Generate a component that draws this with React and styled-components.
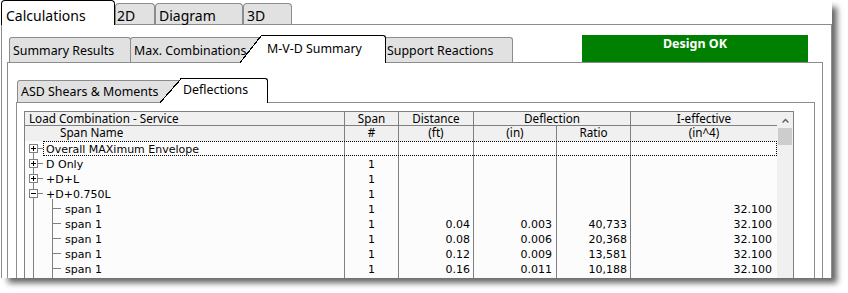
import styled, { createGlobalStyle, css } from 'styled-components'

const GlobalStyle = createGlobalStyle`
  html, body {
    margin: 0;
    background: #fff;
  }
  body {
    width: 848px;
    height: 293px;
    overflow: hidden;
  }
`

const UI_FONT = `'Noto Sans', 'Open Sans', sans-serif`
const GRID_FONT = `'DejaVu Sans', Verdana, sans-serif`
const PANEL_LINE = '#8c8c8c'
const GRID_LINE = '#808080'

const Window = styled.div`
  width: 831px;
  height: 278px;
  margin-left: 1px;
  display: flex;
  flex-direction: column;
  overflow: hidden;
  background: #fff;
  box-shadow: 6px 6px 6px -1px rgba(0, 0, 0, 0.6);
  font-family: ${UI_FONT};
  color: #000;
`

const TopStrip = styled.div`
  flex: none;
  display: flex;
  align-items: flex-end;
  height: 24px;
  position: relative;
  z-index: 1;
`

const TopTab = styled.div`
  box-sizing: border-box;
  flex: none;
  display: flex;
  align-items: flex-end;
  width: ${p => p.$w}px;
  height: ${p => (p.$active ? 25 : 21)}px;
  margin-bottom: ${p => (p.$active ? -1 : 0)}px;
  padding: 0 0 ${p => (p.$active ? 1 : 0)}px ${p => p.$pl}px;
  border: 1px solid ${p => (p.$active ? '#000' : PANEL_LINE)};
  border-bottom: none;
  border-radius: 4px 4px 0 0;
  background: ${p => (p.$active ? '#fff' : '#e1e1e1')};
  font-size: 14px;
  line-height: 17px;
  white-space: nowrap;
`

const Panel = styled.div`
  flex: 1;
  min-height: 0;
  display: flex;
  flex-direction: column;
  border: 1px solid ${PANEL_LINE};
  border-bottom: none;
  margin: ${p => p.$margin || 0};
  padding: ${p => p.$padding || 0};
`

const TabStrip = styled.div`
  box-sizing: border-box;
  flex: none;
  display: flex;
  align-items: flex-end;
  height: ${p => p.$h}px;
  padding: ${p => p.$pt}px 0 0 ${p => p.$pl}px;
  margin: ${p => p.$margin};
  position: relative;
  z-index: 1;
`

const Tab = styled.div`
  box-sizing: border-box;
  flex: none;
  position: relative;
  display: flex;
  align-items: flex-end;
  width: ${p => p.$w}px;
  height: ${p => p.$h}px;
  margin-left: ${p => p.$ml || 0}px;
  padding: 0 0 ${p => p.$pb}px ${p => p.$pl}px;
  border: 1px solid ${PANEL_LINE};
  border-bottom: none;
  border-radius: 3px 3px 0 0;
  background: #e1e1e1;
  font-size: 12.4px;
  line-height: 15px;
  white-space: nowrap;
  overflow: hidden;
`

// selected tab: white body with a slanted left edge that runs over the previous tab
const ActiveTab = styled(Tab)`
  z-index: 2;
  overflow: visible;
  margin-bottom: -1px;
  border-color: #000;
  border-left: none;
  border-top-left-radius: 0;
  background: #fff;

  &::before {
    content: '';
    position: absolute;
    top: -1px;
    bottom: 0;
    left: -22px;
    width: 22px;
    background: linear-gradient(
      to bottom right,
      transparent calc(50% - 0.8px),
      #000 calc(50% - 0.8px),
      #000 calc(50% + 0.4px),
      #fff calc(50% + 0.4px)
    );
  }
`

const StatusBadge = styled.div`
  flex: none;
  box-sizing: border-box;
  width: 226px;
  height: 27px;
  margin: 0 15px 0 auto;
  padding-top: 1px;
  background: #008000;
  color: #fff;
  font-size: 12.5px;
  font-weight: 700;
  line-height: 15px;
  text-align: center;
`

const columns = css`
  display: grid;
  grid-template-columns: 319px 54px 75px 83px 74px 147px;
`

const Grid = styled.div`
  box-sizing: border-box;
  width: 770px;
  flex: 1;
  min-height: 0;
  display: flex;
  border: 1px solid ${GRID_LINE};
  border-bottom: none;
  background: #fcfcfc;
`

const Sheet = styled.div`
  width: 752px;
  display: flex;
  flex-direction: column;
`

const HeadRow = styled.div`
  ${columns};
  flex: none;
  box-sizing: border-box;
  height: ${p => p.$h}px;
  background: #f0f0f0;
  border-bottom: ${p => (p.$rule ? `1px solid ${GRID_LINE}` : 'none')};
  font-size: 11.7px;
  line-height: ${p => p.$lh}px;
`

const HeadCell = styled.div`
  grid-column: span ${p => p.$span || 1};
  border-left: ${p => (p.$first ? 'none' : `1px solid ${GRID_LINE}`)};
  padding-left: ${p => p.$pl || 0}px;
  text-align: ${p => (p.$first ? 'left' : 'center')};
  white-space: nowrap;
`

const DataRow = styled.div`
  ${columns};
  grid-auto-rows: 15px;
  flex: none;
  height: 15px;
  position: relative;
  font-family: ${GRID_FONT};
  font-size: 11px;
  line-height: 15px;

  ${p =>
    p.$focused &&
    css`
      &::after {
        content: '';
        position: absolute;
        inset: 0 0 0 18px;
        border: 1px dotted #000;
        pointer-events: none;
      }
    `}
`

const NameCell = styled.div`
  display: flex;
  align-items: flex-start;
  white-space: nowrap;
`

const NameText = styled.span`
  padding-top: 1px;
`

const DataCell = styled.div`
  box-sizing: border-box;
  border-left: 1px solid ${GRID_LINE};
  padding: 1px ${p => p.$pr || 0}px 0 0;
  text-align: ${p => p.$align || 'right'};
  white-space: nowrap;
  overflow: hidden;
`

const ScrollBar = styled.div`
  width: 16px;
  flex: none;
  display: flex;
  flex-direction: column;
  align-items: center;
  background: #f0f0f0;
`

const ScrollButton = styled.div`
  width: 16px;
  height: 16px;
  display: flex;
  align-items: center;
  justify-content: center;
`

const ScrollThumb = styled.div`
  width: 14px;
  height: 17px;
  background: #cdcdcd;
`

function TreeGlyph({ kind, open }) {
  const w = kind === 'child' ? 40 : 21
  return (
    <svg width={w} height="15" viewBox={`0 0 ${w} 15`} overflow="visible" shapeRendering="crispEdges">
      <line x1="8.5" y1={kind === 'first' ? 7 : 0} x2="8.5" y2="15" stroke="#808080" />
      {kind === 'child' ? (
        <>
          <line x1="27.5" y1="0" x2="27.5" y2="15" stroke="#808080" />
          <line x1="28" y1="7.5" x2="36" y2="7.5" stroke="#808080" />
        </>
      ) : (
        <>
          <line x1="13" y1="7.5" x2="18" y2="7.5" stroke="#808080" />
          <rect x="4.5" y="3.5" width="8" height="8" fill="#fff" stroke="#808080" />
          <line x1="6" y1="7.5" x2="11" y2="7.5" stroke="#000" />
          {!open && <line x1="8.5" y1="5" x2="8.5" y2="10" stroke="#000" />}
          {open && <line x1="27.5" y1="13" x2="27.5" y2="15" stroke="#808080" />}
        </>
      )}
    </svg>
  )
}

const rows = [
  { kind: 'first', name: 'Overall MAXimum Envelope', focused: true },
  { kind: 'root', name: 'D Only', span: '1' },
  { kind: 'root', name: '+D+L', span: '1' },
  { kind: 'root', open: true, name: '+D+0.750L', span: '1' },
  { kind: 'child', name: 'span 1', span: '1', ieff: '32.100' },
  { kind: 'child', name: 'span 1', span: '1', dist: '0.04', defl: '0.003', ratio: '40,733', ieff: '32.100' },
  { kind: 'child', name: 'span 1', span: '1', dist: '0.08', defl: '0.006', ratio: '20,368', ieff: '32.100' },
  { kind: 'child', name: 'span 1', span: '1', dist: '0.12', defl: '0.009', ratio: '13,581', ieff: '32.100' },
  { kind: 'child', name: 'span 1', span: '1', dist: '0.16', defl: '0.011', ratio: '10,188', ieff: '32.100' },
  { kind: 'child', name: '' },
]

export default function App() {
  return (
    <>
      <GlobalStyle />
      <Window>
        <TopStrip>
          <TopTab $active $w={114} $pl={4}>Calculations</TopTab>
          <TopTab $w={40} $pl={1}>2D</TopTab>
          <TopTab $w={88} $pl={3}>Diagram</TopTab>
          <TopTab $w={49} $pl={3}>3D</TopTab>
        </TopStrip>

        <Panel>
          <TabStrip $h={37} $pt={10} $pl={2} $margin="0 8px 0 5px">
            <Tab $w={122} $h={25} $pl={3} $pb={4}>Summary Results</Tab>
            <Tab $w={134} $h={25} $ml={-1} $pl={3} $pb={4}>Max. Combinations</Tab>
            <ActiveTab $w={124} $h={28} $ml={-2} $pl={5} $pb={7}>M-V-D Summary</ActiveTab>
            <Tab $w={129} $h={25} $ml={-2} $pl={2} $pb={4}>Support Reactions</Tab>
            <StatusBadge>Design OK</StatusBadge>
          </TabStrip>

          <Panel $margin="0 8px 0 5px">
            <TabStrip $h={39} $pt={15} $pl={1} $margin="0 7px 0 8px">
              <Tab $w={167} $h={22} $pl={3} $pb={3}>ASD Shears &amp; Moments</Tab>
              <ActiveTab $w={86} $h={25} $ml={-2} $pl={1} $pb={6}>Deflections</ActiveTab>
            </TabStrip>

            <Panel $margin="0 7px 0 8px" $padding="8px 0 0 7px">
              <Grid>
                <Sheet>
                  <HeadRow $h={14} $lh={12} $rule>
                    <HeadCell $first $pl={4}>Load Combination - Service</HeadCell>
                    <HeadCell>Span</HeadCell>
                    <HeadCell>Distance</HeadCell>
                    <HeadCell $span={2}>Deflection</HeadCell>
                    <HeadCell>I-effective</HeadCell>
                  </HeadRow>
                  <HeadRow $h={15} $lh={12.5}>
                    <HeadCell $first $pl={35}>Span Name</HeadCell>
                    <HeadCell>#</HeadCell>
                    <HeadCell>(ft)</HeadCell>
                    <HeadCell>(in)</HeadCell>
                    <HeadCell>Ratio</HeadCell>
                    <HeadCell>(in^4)</HeadCell>
                  </HeadRow>

                  {rows.map((r, i) => (
                    <DataRow key={i} $focused={r.focused}>
                      <NameCell>
                        <TreeGlyph kind={r.kind} open={r.open} />
                        <NameText>{r.name}</NameText>
                      </NameCell>
                      <DataCell $align="center">{r.span}</DataCell>
                      <DataCell $pr={3}>{r.dist}</DataCell>
                      <DataCell $pr={4}>{r.defl}</DataCell>
                      <DataCell $pr={3}>{r.ratio}</DataCell>
                      <DataCell $pr={5}>{r.ieff}</DataCell>
                    </DataRow>
                  ))}
                </Sheet>

                <ScrollBar>
                  <ScrollButton>
                    <svg width="7" height="5" viewBox="0 0 7 5">
                      <path d="M0.6 4.4 L3.5 1.4 L6.4 4.4" fill="none" stroke="#606060" strokeWidth="1.4" />
                    </svg>
                  </ScrollButton>
                  <ScrollThumb />
                </ScrollBar>
              </Grid>
            </Panel>
          </Panel>
        </Panel>
      </Window>
    </>
  )
}
